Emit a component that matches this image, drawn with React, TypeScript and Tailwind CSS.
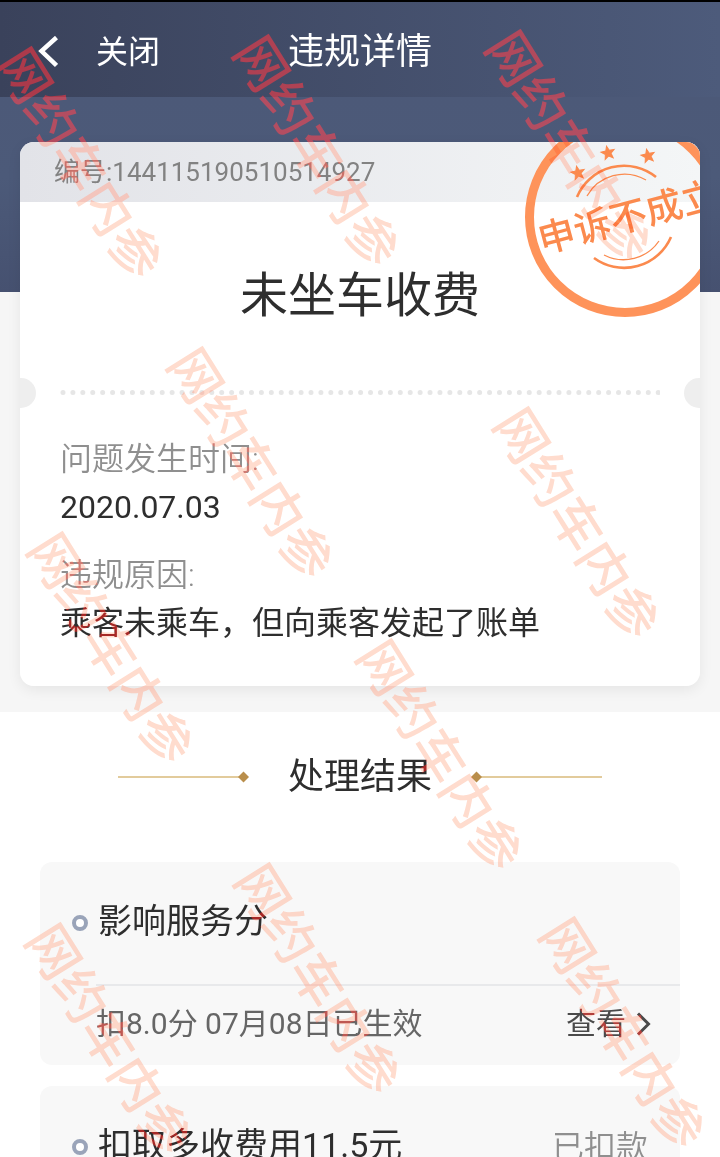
import { ReactNode } from "react";

const watermarks = [
  { x: 78, y: 165 },
  { x: 315, y: 153 },
  { x: 567, y: 148 },
  { x: 249, y: 465 },
  { x: 575, y: 525 },
  { x: 109, y: 650 },
  { x: 438, y: 757 },
  { x: 316, y: 981 },
  { x: 107, y: 1041 },
  { x: 621, y: 1035 },
];

const details = [
  { label: "问题发生时间:", value: "2020.07.03" },
  { label: "违规原因:", value: "乘客未乘车，但向乘客发起了账单" },
];

function Header() {
  return (
    <header className="grid h-[97px] grid-cols-[1fr_auto_1fr] items-center border-t-2 border-black bg-linear-to-r from-[#3a425b] to-[#4d5b7b] pt-1 text-white">
      <div className="flex items-center pl-[38px]">
        <button type="button" aria-label="返回" className="pr-[38px]">
          <svg width="20" height="32" viewBox="0 0 20 32" fill="none" stroke="currentColor" strokeWidth="4.500">
            <path d="M18.500 1.500 3.500 15l15 14.500" />
          </svg>
        </button>
        <button type="button" className="text-[32px] leading-[48px]">
          关闭
        </button>
      </div>
      <h1 className="text-[36px] leading-[48px]">违规详情</h1>
    </header>
  );
}

function Star({ x, y }: { x: number; y: number }) {
  return (
    <polygon
      transform={`translate(${x} ${y}) rotate(-12)`}
      points="0,-7 1.8,-2.4 6.7,-2.2 2.9,0.9 4.1,5.7 0,3 -4.1,5.7 -2.9,0.9 -6.7,-2.2 -1.8,-2.4"
      fill="#fb8a4e"
    />
  );
}

function Stamp() {
  return (
    <svg
      className="absolute -top-[25px] -right-[25px]"
      width="200"
      height="200"
      viewBox="0 0 200 200"
      fill="none"
      stroke="#fb8a4e"
    >
      <circle cx="100" cy="100" r="95.5" stroke="#fe935a" strokeWidth="9" />
      <path d="M52 80A51 51 0 0 1 131 60" strokeWidth="2.6" />
      <path d="M62 79A43 43 0 0 1 121 63" strokeWidth="1.3" />
      <path d="M69 141A51 51 0 0 0 146 120" strokeWidth="2.6" />
      <path d="M79 138A43 43 0 0 0 134 124" strokeWidth="1.3" />
      <Star x={53} y={56} />
      <Star x={83} y={36} />
      <Star x={123} y={39} />
      <text
        transform="translate(103 99) rotate(-15)"
        y="14"
        textAnchor="middle"
        fontSize="37"
        fontWeight="500"
        fill="#fb8a4e"
        stroke="none"
      >
        申诉不成立
      </text>
    </svg>
  );
}

function TicketCard() {
  return (
    <section className="bg-[linear-gradient(#4c5978_0,#4c5a79_80px,#465170_195px,#f6f6f6_195px)] px-5 pt-[45px] pb-[26px]">
      <div className="rounded-[14px] shadow-[0_4px_14px_rgba(0,0,0,0.07)]">
        <div className="relative overflow-hidden rounded-[14px] bg-white">
          <p className="bg-linear-to-r from-[#e2e3e8] to-[#f4f6f7] px-[34px] text-[26px] leading-[60px] text-[#828282]">
            编号:144115190510514927
          </p>
          <h2 className="pt-[62px] pb-[50px] text-center text-[48px] leading-[64px] text-[#2e2e2e]">
            未坐车收费
          </h2>
          <div className="flex items-center justify-between">
            <span className="h-[30px] w-4 rounded-r-full bg-[#eeeeee]" />
            <svg className="mx-6 h-[6px] min-w-0 flex-1" aria-hidden="true">
              <line
                x1="3"
                y1="2.5"
                x2="99.8%"
                y2="2.5"
                stroke="#e6e6e6"
                strokeWidth="5"
                strokeLinecap="round"
                strokeDasharray="0 9.92"
              />
            </svg>
            <span className="h-[30px] w-4 rounded-l-full bg-[#eeeeee]" />
          </div>
          <dl className="flex flex-col gap-5 px-10 pt-[27px] pb-[39px] text-[32px] leading-[48px]">
            {details.map((item) => (
              <div key={item.label}>
                <dt className="font-[350] text-[#8f8f8f]">{item.label}</dt>
                <dd className="text-[#2e2e2e]">{item.value}</dd>
              </div>
            ))}
          </dl>
          <Stamp />
        </div>
      </div>
    </section>
  );
}

function Ornament() {
  return (
    <svg width="131" height="12" viewBox="0 0 131 12" aria-hidden="true">
      <path d="M0 6h126" stroke="#e2cb9c" strokeWidth="2" />
      <path d="M125.5.5l5.500 5.500-5.500 5.500-5.500-5.500z" fill="#b98e4b" />
    </svg>
  );
}

function ResultCard({ title, status, children }: { title: string; status?: string; children?: ReactNode }) {
  return (
    <article className="rounded-xl bg-[#f8f8f8]">
      <div className="flex h-[122px] items-center gap-2.5 px-8">
        <span className="size-4 rounded-full border-4 border-[#9aa4b9] bg-white" />
        <h3 className="flex-1 pb-1 text-[34px] leading-[48px] text-[#2e2e2e]">{title}</h3>
        {status && <span className="text-[32px] leading-[48px] font-[350] text-[#8f8f8f]">{status}</span>}
      </div>
      {children}
    </article>
  );
}

function Results() {
  return (
    <main className="bg-white px-10">
      <div className="flex items-center justify-center gap-[39px] pt-[41px] pb-[61px]">
        <Ornament />
        <h2 className="text-[36px] leading-[48px] text-[#2e2e2e]">处理结果</h2>
        <span className="-scale-x-100">
          <Ornament />
        </span>
      </div>
      <div className="flex flex-col gap-[21px]">
        <ResultCard title="影响服务分">
          <div className="ml-14 flex h-[81px] items-center justify-between border-t-2 border-[#e8e9eb] pr-[29px] pb-1 text-[30px] leading-[48px]">
            <p className="text-[#666666]">扣8.0分 07月08日已生效</p>
            <a href="#score" className="flex items-center gap-2.5 text-[#4a4a4a]">
              查看
              <svg width="15" height="24" viewBox="0 0 15 24" fill="none" stroke="currentColor" strokeWidth="3">
                <path d="M2 1.5 12.500 12 2 22.500" />
              </svg>
            </a>
          </div>
        </ResultCard>
        <ResultCard title="扣取多收费用11.5元" status="已扣款" />
      </div>
    </main>
  );
}

export default function App() {
  return (
    <div className="relative h-screen overflow-hidden bg-white font-[Roboto,'Noto_Sans_CJK_SC',sans-serif]">
      <Header />
      <TicketCard />
      <Results />

      {/* Watermark layer */}
      <div className="pointer-events-none absolute inset-0 overflow-hidden mix-blend-hard-light" aria-hidden="true">
        {watermarks.map((mark) => (
          <span
            key={`${mark.x}-${mark.y}`}
            className="absolute -translate-x-1/2 -translate-y-1/2 rotate-58 text-[52px] leading-none font-medium whitespace-nowrap text-[#c96e67]"
            style={{ left: mark.x, top: mark.y }}
          >
            网约车内参
          </span>
        ))}
      </div>
    </div>
  );
}
